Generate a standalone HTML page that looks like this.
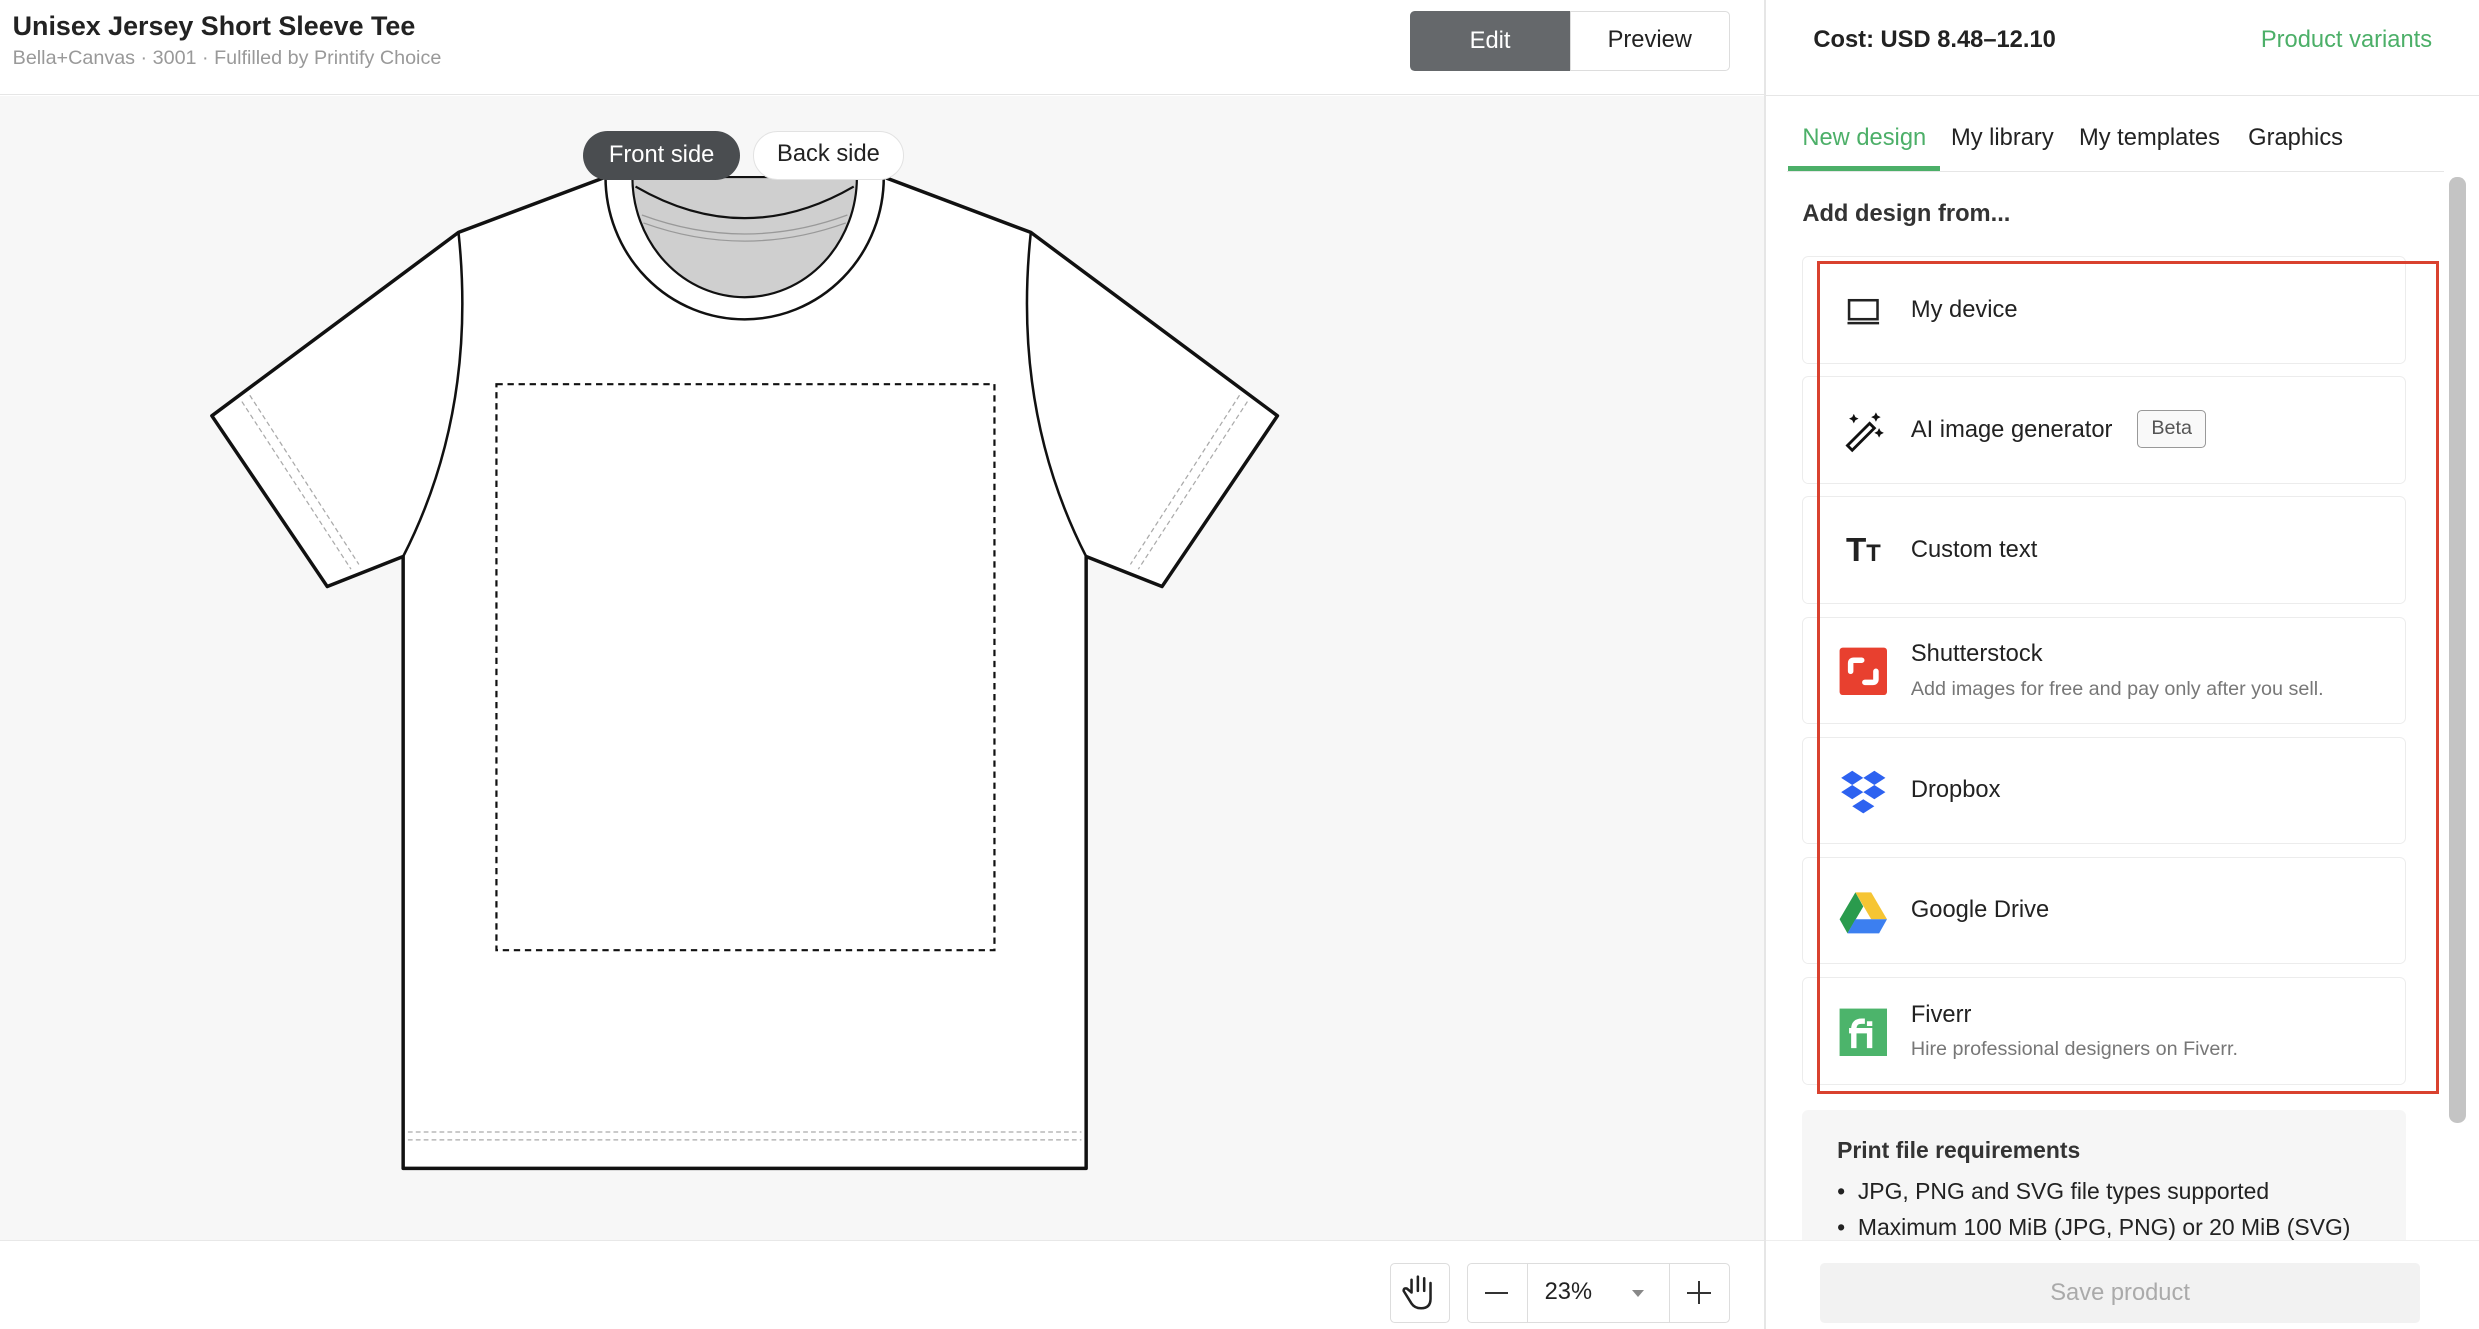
<!DOCTYPE html>
<html><head><meta charset="utf-8"><style>
*{box-sizing:border-box;margin:0;padding:0}
html,body{width:2479px;height:1329px;overflow:hidden;background:#fff}
#r{zoom:1.581;width:1568px;height:841px;position:relative;font-family:"Liberation Sans",Arial,sans-serif;color:#222}
.a{position:absolute}
.card{position:absolute;left:1140px;width:382px;height:68px;border:1px solid #ececec;border-radius:4px;background:#fff}
.card .t{position:absolute;left:68px;font-size:15px;color:#222}
.card .s{position:absolute;left:68px;top:38px;font-size:12.5px;color:#777}
.ic{position:absolute;left:22px;top:18px;width:32px;height:32px}
</style></head><body><div id="r">
<div class="a" style="left:0;top:0;width:1117px;height:60px;background:#fff;border-bottom:1px solid #e6e6e6"></div>
<div class="a" style="left:8px;top:7px;font-size:17px;font-weight:bold;color:#222">Unisex Jersey Short Sleeve Tee</div>
<div class="a" style="left:8px;top:30px;font-size:12.5px;color:#999">Bella+Canvas · 3001 · Fulfilled by Printify Choice</div>
<div class="a" style="left:892px;top:7px;width:101px;height:38px;background:#65686b;color:#fff;font-size:15px;text-align:center;line-height:38px;border-radius:3px 0 0 3px">Edit</div>
<div class="a" style="left:993px;top:7px;width:101px;height:38px;border:1px solid #ddd;font-size:15px;text-align:center;line-height:36px;border-radius:0 3px 3px 0;color:#222">Preview</div>
<div class="a" style="left:0;top:61px;width:1117px;height:723px;background:#f7f7f7"></div>
<div class="a" style="left:0;top:784px;width:1117px;height:57px;background:#fff;border-top:1px solid #e8e8e8"></div>
<div class="a" style="left:1116px;top:0;width:1px;height:841px;background:#e6e6e6"></div>
<svg class="a" style="left:0;top:0" width="1117" height="784">
<path d="M383,112 L290,147 L134,263 L207,371 L255,352 L255,739 L687,739 L687,352 L735,371 L808,263 L652,147 L559,112" fill="#fff" stroke="#111" stroke-width="2.2" stroke-linejoin="round"/>
<path d="M290,147 Q302,260 255,352 M652,147 Q640,260 687,352" fill="none" stroke="#111" stroke-width="1.6"/>
<path d="M383,112 A88,90 0 0 0 559,112" fill="#fff" stroke="#111" stroke-width="1.6"/>
<path d="M400,112 A71,76 0 0 0 542,112 Z" fill="#cfcfcf" stroke="#111" stroke-width="1.4"/>
<path d="M402,118 Q471,158 540,118" fill="none" stroke="#111" stroke-width="1.4"/>
<path d="M406,136 Q471,160 536,136 M407,141 Q471,164 535,141" fill="none" stroke="#999" stroke-width="0.8"/>
<path d="M153,254 L222,360 M158,250 L227,357 M789,254 L720,360 M784,250 L715,357 M258,716 L684,716 M258,721 L684,721" stroke="#aaa" stroke-width="0.8" stroke-dasharray="3 2"/>
<rect x="314" y="243" width="315" height="358" fill="none" stroke="#111" stroke-width="1.4" stroke-dasharray="4 3"/>
</svg>
<div class="a" style="left:369px;top:83px;width:99px;height:31px;background:#4a4d50;color:#fff;border-radius:16px;font-size:15px;text-align:center;line-height:31px">Front side</div>
<div class="a" style="left:476px;top:83px;width:96px;height:31px;background:#fff;border:1px solid #e2e2e2;border-radius:16px;font-size:15px;text-align:center;line-height:29px">Back side</div>
<div class="a" style="left:879px;top:799px;width:38px;height:38px;border:1px solid #ddd;border-radius:3px"><svg width="36" height="36" viewBox="0 0 36 36"><path d="M13,18 V10 M17,17 V8 M21,17 V9 M25,18 V12 M13,18 L10,15.5 Q8,15 8,17 L13,25 Q15,28 19,28 Q25,28 25,22 V18" fill="none" stroke="#222" stroke-width="1.6" stroke-linecap="round" stroke-linejoin="round"/></svg></div>
<div class="a" style="left:928px;top:799px;width:166px;height:38px;border:1px solid #ddd;border-radius:3px"></div>
<div class="a" style="left:966px;top:799px;width:90px;height:38px;border-left:1px solid #ddd;border-right:1px solid #ddd"></div>
<div class="a" style="left:939px;top:817px;width:15px;height:1.6px;background:#333"></div>
<div class="a" style="left:977px;top:809px;font-size:15px">23%</div>
<div class="a" style="left:1032px;top:816px;border:4px solid transparent;border-top:5px solid #888"></div>
<div class="a" style="left:1067px;top:817px;width:15px;height:1.6px;background:#333"></div>
<div class="a" style="left:1073.7px;top:810px;width:1.6px;height:15px;background:#333"></div>
<div class="a" style="left:1147px;top:17px;font-size:15px;font-weight:bold;color:#222">Cost: USD 8.48–12.10</div>
<div class="a" style="left:1430px;top:17px;font-size:15px;color:#4caf68">Product variants</div>
<div class="a" style="left:1117px;top:60px;width:451px;height:1px;background:#e6e6e6"></div>
<div class="a" style="left:1130px;top:108px;width:416px;height:1px;background:#e6e6e6"></div>
<div class="a" style="left:1140px;top:79px;font-size:15px;color:#4caf68">New design</div>
<div class="a" style="left:1131px;top:105px;width:96px;height:3px;background:#4caf68"></div>
<div class="a" style="left:1234px;top:79px;font-size:15px">My library</div>
<div class="a" style="left:1315px;top:79px;font-size:15px">My templates</div>
<div class="a" style="left:1422px;top:79px;font-size:15px">Graphics</div>
<div class="a" style="left:1140px;top:127px;font-size:15px;font-weight:bold;color:#333">Add design from...</div>
<div class="a" style="left:1549px;top:112px;width:11px;height:598px;background:#c4c4c4;border-radius:5px"></div>
<div class="card" style="top:162px"><svg class="ic" viewBox="0 0 32 32"><rect x="7" y="9" width="18" height="12" fill="none" stroke="#222" stroke-width="1.6"/><path d="M6,23.5 H26" stroke="#222" stroke-width="1.6"/></svg><div class="t" style="top:25px">My device</div></div>
<div class="card" style="top:238px"><svg class="ic" viewBox="0 0 32 32"><path d="M6,28 L20,14 L23,17 L9,31 Z" fill="none" stroke="#111" stroke-width="1.8" transform="translate(0,-3)"/><path d="M10,5 l1,2 2,1 -2,1 -1,2 -1,-2 -2,-1 2,-1z M24,4 l1,2 2,1 -2,1 -1,2 -1,-2 -2,-1 2,-1z M26,14 l1,2 2,1 -2,1 -1,2 -1,-2 -2,-1 2,-1z" fill="#111"/></svg><div class="t" style="top:25px">AI image generator</div><div class="a" style="left:211px;top:21px;width:44px;height:24px;border:1px solid #999;border-radius:3px;font-size:12.5px;color:#555;text-align:center;line-height:22px;background:#f9f9f9">Beta</div></div>
<div class="card" style="top:314px"><div class="ic" style="font-size:21px;font-weight:bold;line-height:32px;text-align:center">T<span style="font-size:15px">T</span></div><div class="t" style="top:25px">Custom text</div></div>
<div class="card" style="top:390px"><svg class="ic" viewBox="0 0 32 32"><rect x="1" y="1" width="30" height="30" rx="2" fill="#e8402f"/><path d="M8,16 V11 Q8,9 10,9 H15 M24,16 V21 Q24,23 22,23 H17" fill="none" stroke="#fff" stroke-width="3.5" stroke-linecap="round"/></svg><div class="t" style="top:15px">Shutterstock</div><div class="s">Add images for free and pay only after you sell.</div></div>
<div class="card" style="top:466px"><svg class="ic" viewBox="0 0 32 32"><g fill="#2d62f0"><path d="M9,3 l7,4.5 -7,4.5 -7,-4.5z M23,3 l7,4.5 -7,4.5 -7,-4.5z M9,12 l7,4.5 -7,4.5 -7,-4.5z M23,12 l7,4.5 -7,4.5 -7,-4.5z M16,21 l7,4.5 -7,4.5 -7,-4.5z"/></g></svg><div class="t" style="top:25px">Dropbox</div></div>
<div class="card" style="top:542px"><svg class="ic" viewBox="0 0 32 32"><path d="M11,4 H21 L31,21 H21Z" fill="#f6c533"/><path d="M11,4 L16,13 L6,30 L1,21Z" fill="#2a9b4d"/><path d="M11,21 H31 L26,30 H6Z" fill="#3c7ff0"/></svg><div class="t" style="top:25px">Google Drive</div></div>
<div class="card" style="top:618px"><svg class="ic" viewBox="0 0 32 32"><rect x="1" y="1" width="30" height="30" fill="#4cb46b"/><path d="M10,26 V14 Q10,9 15,9 H17 M7,15 H20 V26 M20,9 V12" fill="none" stroke="#fff" stroke-width="3.4"/></svg><div class="t" style="top:15px">Fiverr</div><div class="s">Hire professional designers on Fiverr.</div></div>
<div class="a" style="left:1149px;top:165px;width:394px;height:527px;border:2.5px solid #d9412f"></div>
<div class="a" style="left:1140px;top:702px;width:382px;height:90px;background:#f6f6f6;border-radius:4px"></div>
<div class="a" style="left:1162px;top:719px;font-size:14.5px;font-weight:bold;color:#333">Print file requirements</div>
<div class="a" style="left:1162px;top:742px;font-size:14.5px;color:#222;line-height:23px">• &nbsp;JPG, PNG and SVG file types supported<br>• &nbsp;Maximum 100 MiB (JPG, PNG) or 20 MiB (SVG)</div>
<div class="a" style="left:1117px;top:784px;width:451px;height:57px;background:#fff;border-top:1px solid #eee"></div>
<div class="a" style="left:1151px;top:799px;width:380px;height:38px;background:#f2f2f2;border-radius:3px;color:#aaa;font-size:15px;text-align:center;line-height:38px">Save product</div>
</div></body></html>
